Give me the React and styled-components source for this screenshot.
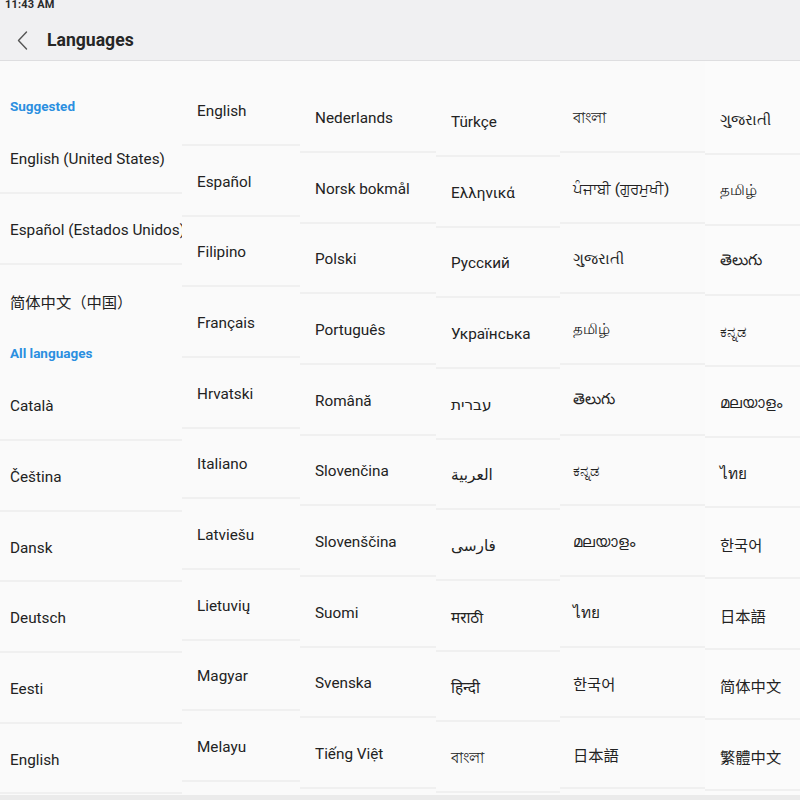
import React from "react";
import styled, { createGlobalStyle } from "styled-components";

const Global = createGlobalStyle`
  html, body { margin: 0; padding: 0; }
  body {
    width: 800px;
    height: 800px;
    overflow: hidden;
    background: #fafafa;
    font-family: Roboto, "Noto Sans", "DejaVu Sans", "Noto Sans CJK SC", sans-serif;
    color: #222;
  }
`;

const Screen = styled.div`
  width: 800px;
  height: 800px;
  display: flex;
  flex-direction: column;
  overflow: hidden;
  background: #fafafa;
`;

const Top = styled.header`
  height: 60px;
  flex: none;
  background: #f0f0f2;
  border-bottom: 1px solid #dedee0;
  display: flex;
  flex-direction: column;
`;

const StatusBar = styled.div`
  height: 20px;
  padding: 0 5px;
  display: flex;
  align-items: flex-start;
`;

const Clock = styled.span`
  font-size: 11px;
  line-height: 9px;
  font-weight: 700;
  color: #2a2a2a;
  letter-spacing: 0.2px;
`;

const TitleBar = styled.div`
  height: 40px;
  display: flex;
  align-items: center;
  padding-left: 16px;
  gap: 18px;
`;

const BackButton = styled.button`
  width: 13px;
  height: 22px;
  padding: 0;
  border: 0;
  background: none;
  display: flex;
  align-items: center;
  justify-content: center;
`;

const Title = styled.h1`
  margin: 0;
  font-size: 17.6px;
  font-weight: 700;
  color: #262626;
`;

const Body = styled.main`
  flex: 1;
  display: flex;
  overflow: hidden;
`;

const Column = styled.section`
  width: ${(p) => p.$width}px;
  flex: none;
  padding-top: ${(p) => p.$offset}px;
  background: ${(p) => p.$bg || "#fafafa"};
  display: flex;
  flex-direction: column;
  overflow: hidden;
`;

const FadeBar = styled.div`
  height: 7px;
  margin-top: -26px;
  margin-bottom: 19px;
  background: #ebebeb;
`;

const SectionHeader = styled.div`
  height: 35px;
  flex: none;
  display: flex;
  align-items: center;
  padding-left: 10px;
  font-size: 13.5px;
  font-weight: 700;
  color: #2b8fe0;
`;

const Row = styled.div`
  height: 70.67px;
  flex: none;
  box-sizing: border-box;
  display: flex;
  align-items: center;
  padding-top: 3px;
  padding-left: ${(p) => p.$pad}px;
  border-bottom: 2px solid ${(p) => (p.$last ? "transparent" : "#f0f0f0")};
  font-size: 15.3px;
  color: #222;
  white-space: nowrap;
  overflow: hidden;
`;

const BottomEdge = styled.div`
  height: 5px;
  flex: none;
  background: #ebebeb;
`;

const Chevron = () => (
  <svg width="11" height="19" viewBox="0 0 11 19" fill="none">
    <path d="M9.5 1 L1.5 9.5 L9.5 18" stroke="#555" strokeWidth="1.4" strokeLinecap="round" strokeLinejoin="round" />
  </svg>
);

const columns = [
  {
    width: 182,
    offset: 27.5,
    pad: 10,
    sections: [
      { header: "Suggested", items: ["English (United States)", "Español (Estados Unidos)", "简体中文（中国）"] },
      { header: "All languages", items: ["Català", "Čeština", "Dansk", "Deutsch", "Eesti", "English"] },
    ],
  },
  {
    width: 118,
    offset: 14.3,
    pad: 15,
    sections: [{ items: ["English", "Español", "Filipino", "Français", "Hrvatski", "Italiano", "Latviešu", "Lietuvių", "Magyar", "Melayu", ""] }],
  },
  {
    width: 136,
    offset: 21.3,
    pad: 15,
    sections: [{ items: ["Nederlands", "Norsk bokmål", "Polski", "Português", "Română", "Slovenčina", "Slovenščina", "Suomi", "Svenska", "Tiếng Việt", ""] }],
  },
  {
    width: 124,
    offset: 25.3,
    pad: 15,
    sections: [{ items: ["Türkçe", "Ελληνικά", "Русский", "Українська", "עברית", "العربية", "فارسی", "मराठी", "हिन्दी", "বাংলা", ""] }],
  },
  {
    width: 145,
    offset: 21.3,
    pad: 13,
    sections: [{ items: ["বাংলা", "ਪੰਜਾਬੀ (ਗੁਰਮੁਖੀ)", "ગુજરાતી", "தமிழ்", "తెలుగు", "ಕನ್ನಡ", "മലയാളം", "ไทย", "한국어", "日本語", ""] }],
  },
  {
    width: 95,
    offset: 30.3,
    pad: 15,
    bg: "#fbfbfb",
    fade: true,
    sections: [{ items: ["ગુજરાતી", "தமிழ்", "తెలుగు", "ಕನ್ನಡ", "മലയാളം", "ไทย", "한국어", "日本語", "简体中文", "繁體中文", ""] }],
  },
];

export default function App() {
  return (
    <>
      <Global />
      <Screen>
        <Top>
          <StatusBar>
            <Clock>11:43 AM</Clock>
          </StatusBar>
          <TitleBar>
            <BackButton aria-label="Back">
              <Chevron />
            </BackButton>
            <Title>Languages</Title>
          </TitleBar>
        </Top>
        <Body>
          {columns.map((col, ci) => (
            <Column key={ci} $width={col.width} $offset={col.offset} $bg={col.bg}>
              {col.fade && <FadeBar />}
              {col.sections.map((sec, si) => (
                <React.Fragment key={si}>
                  {sec.header && <SectionHeader>{sec.header}</SectionHeader>}
                  {sec.items.map((it, ii) => (
                    <Row
                      key={ii}
                      $pad={col.pad}
                      $last={sec.header && ii === sec.items.length - 1 && si < col.sections.length - 1}
                    >
                      {it}
                    </Row>
                  ))}
                </React.Fragment>
              ))}
            </Column>
          ))}
        </Body>
        <BottomEdge />
      </Screen>
    </>
  );
}
